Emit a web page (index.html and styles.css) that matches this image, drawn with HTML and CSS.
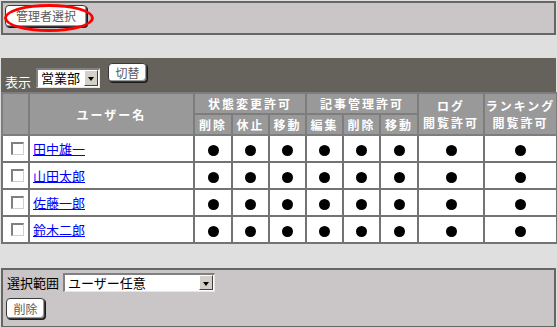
FILE: index.html
```html
<!DOCTYPE html>
<html lang="ja">
<head>
  <meta charset="UTF-8">
  <title>ユーザー権限</title>
  <link rel="stylesheet" href="styles.css">
</head>
<body>
  <div class="panel top-panel">
    <span class="btn btn-admin">管理者選択</span>
    <span class="mark"></span>
  </div>

  <div class="main">
    <div class="toolbar">
      <span class="toolbar-label">表示</span>
      <span class="select select-dept"><span class="select-text">営業部</span><span class="select-arrow"></span></span>
      <span class="btn btn-switch">切替</span>
    </div>

    <table class="users">
      <colgroup>
        <col style="width:27px"><col style="width:165px">
        <col style="width:38px"><col style="width:37px"><col style="width:37px">
        <col style="width:37px"><col style="width:37px"><col style="width:38px">
        <col style="width:66px"><col style="width:73px">
      </colgroup>
      <tr class="head">
        <th rowspan="2"></th>
        <th rowspan="2">ユーザー名</th>
        <th colspan="3">状態変更許可</th>
        <th colspan="3">記事管理許可</th>
        <th rowspan="2">ログ<br>閲覧許可</th>
        <th rowspan="2">ランキング<br>閲覧許可</th>
      </tr>
      <tr class="head">
        <th>削除</th><th>休止</th><th>移動</th>
        <th>編集</th><th>削除</th><th>移動</th>
      </tr>
      <tr>
        <td class="chk"><span class="box"></span></td>
        <td class="name"><a href="#">田中雄一</a></td>
        <td><span class="dot"></span></td><td><span class="dot"></span></td><td><span class="dot"></span></td>
        <td><span class="dot"></span></td><td><span class="dot"></span></td><td><span class="dot"></span></td>
        <td><span class="dot"></span></td><td><span class="dot"></span></td>
      </tr>
      <tr>
        <td class="chk"><span class="box"></span></td>
        <td class="name"><a href="#">山田太郎</a></td>
        <td><span class="dot"></span></td><td><span class="dot"></span></td><td><span class="dot"></span></td>
        <td><span class="dot"></span></td><td><span class="dot"></span></td><td><span class="dot"></span></td>
        <td><span class="dot"></span></td><td><span class="dot"></span></td>
      </tr>
      <tr>
        <td class="chk"><span class="box"></span></td>
        <td class="name"><a href="#">佐藤一郎</a></td>
        <td><span class="dot"></span></td><td><span class="dot"></span></td><td><span class="dot"></span></td>
        <td><span class="dot"></span></td><td><span class="dot"></span></td><td><span class="dot"></span></td>
        <td><span class="dot"></span></td><td><span class="dot"></span></td>
      </tr>
      <tr>
        <td class="chk"><span class="box"></span></td>
        <td class="name"><a href="#">鈴木二郎</a></td>
        <td><span class="dot"></span></td><td><span class="dot"></span></td><td><span class="dot"></span></td>
        <td><span class="dot"></span></td><td><span class="dot"></span></td><td><span class="dot"></span></td>
        <td><span class="dot"></span></td><td><span class="dot"></span></td>
      </tr>
    </table>
  </div>

  <div class="panel bottom-panel">
    <div class="range-row">
      <span class="range-label">選択範囲</span>
      <span class="select select-range"><span class="select-text">ユーザー任意</span><span class="select-arrow"></span></span>
    </div>
    <span class="btn btn-delete">削除</span>
  </div>
</body>
</html>
```

FILE: styles.css
```css
body {
  margin: 0;
  padding: 1px 1px 0 1px;
  background: #dfdfdf;
  font-family: "Noto Sans CJK JP", "Noto Sans", sans-serif;
  font-size: 12px;
  color: #000;
}

.panel {
  box-sizing: border-box;
  width: 555px;
  border: 2px solid #666663;
  background-color: #cbc6c8;
  background-image: repeating-conic-gradient(#c7c2c4 0 25%, #cdc8ca 0 50%);
  background-size: 2px 2px;
}

.top-panel {
  position: relative;
  height: 34px;
  padding: 2px 0 0 2px;
}

.btn {
  display: inline-flex;
  align-items: center;
  justify-content: center;
  box-sizing: border-box;
  padding: 0;
  background: #fff;
  border: 1px solid #3a3a3a;
  border-radius: 4px;
  box-shadow: inset -1px -1px 0 #9a9a9a, 1px 1px 0 #1a1a1a;
  color: #5a5a5a;
  font-size: 12px;
  line-height: 1;
  white-space: nowrap;
}

.btn-admin {
  width: 82px;
  height: 22px;
}

/* red annotation ring around the admin button */
.mark {
  position: absolute;
  left: 1px;
  top: 1px;
  width: 90px;
  height: 28px;
  box-sizing: border-box;
  border: 3px solid #f00;
  border-radius: 50%;
}

.main {
  width: 555px;
  margin-top: 23px;
}

.toolbar {
  display: flex;
  align-items: flex-start;
  height: 34px;
  padding-left: 4px;
  background: #65625b;
}

.toolbar-label {
  margin-top: 14px;
  color: #fff;
  font-size: 13px;
}

.select {
  display: flex;
  box-sizing: border-box;
  background: #fff;
  border-top: 2px solid #808080;
  border-left: 2px solid #808080;
  border-right: 1px solid #e8e6e0;
  border-bottom: 1px solid #e8e6e0;
  font-size: 13px;
}

.select-text {
  flex: 1;
  padding-left: 3px;
  line-height: 16px;
}

.select-arrow {
  position: relative;
  width: 14px;
  margin: 0 1px 1px 0;
  box-sizing: border-box;
  background: #d4d0c8;
  border-top: 1px solid #fff;
  border-left: 1px solid #fff;
  border-right: 1px solid #404040;
  border-bottom: 1px solid #404040;
}

.select-arrow::after {
  content: "";
  position: absolute;
  left: 3px;
  top: 6px;
  border-left: 3px solid transparent;
  border-right: 3px solid transparent;
  border-top: 4px solid #000;
}

.select-dept {
  width: 64px;
  height: 20px;
  margin: 10px 0 0 5px;
}

.btn-switch {
  width: 39px;
  height: 19px;
  margin: 5px 0 0 8px;
}

.users {
  width: 555px;
  border-collapse: collapse;
  table-layout: fixed;
  background: #fff;
}

.users th,
.users td {
  border: 2px solid #737373;
  padding: 0;
  text-align: center;
}

.users .head th {
  height: 19px;
  background: #999;
  color: #fff;
  font-weight: bold;
  font-size: 12px;
  letter-spacing: 2px;
  line-height: 17px;
  border-color: #7d7d7d;
}

.users td {
  height: 25px;
}

.users td.chk {
  text-align: left;
  padding-left: 8px;
}

.users td.name {
  text-align: left;
  padding-left: 3px;
}

.users a {
  color: #00f;
  font-size: 13px;
}

.box {
  display: block;
  width: 13px;
  height: 13px;
  box-sizing: border-box;
  background: #fff;
  border-top: 2px solid #808080;
  border-left: 2px solid #808080;
  border-right: 1px solid #d4d0c8;
  border-bottom: 1px solid #d4d0c8;
}

.dot {
  display: inline-block;
  width: 11px;
  height: 11px;
  border-radius: 50%;
  background: #000;
  vertical-align: middle;
}

.bottom-panel {
  height: 60px;
  margin-top: 24px;
  padding: 3px 0 0 3px;
}

.range-row {
  display: flex;
  align-items: center;
}

.range-label {
  font-size: 13px;
  margin-left: 1px;
}

.select-range {
  width: 152px;
  height: 19px;
  margin-left: 4px;
}

.btn-delete {
  width: 39px;
  height: 21px;
  margin-top: 6px;
}
```
